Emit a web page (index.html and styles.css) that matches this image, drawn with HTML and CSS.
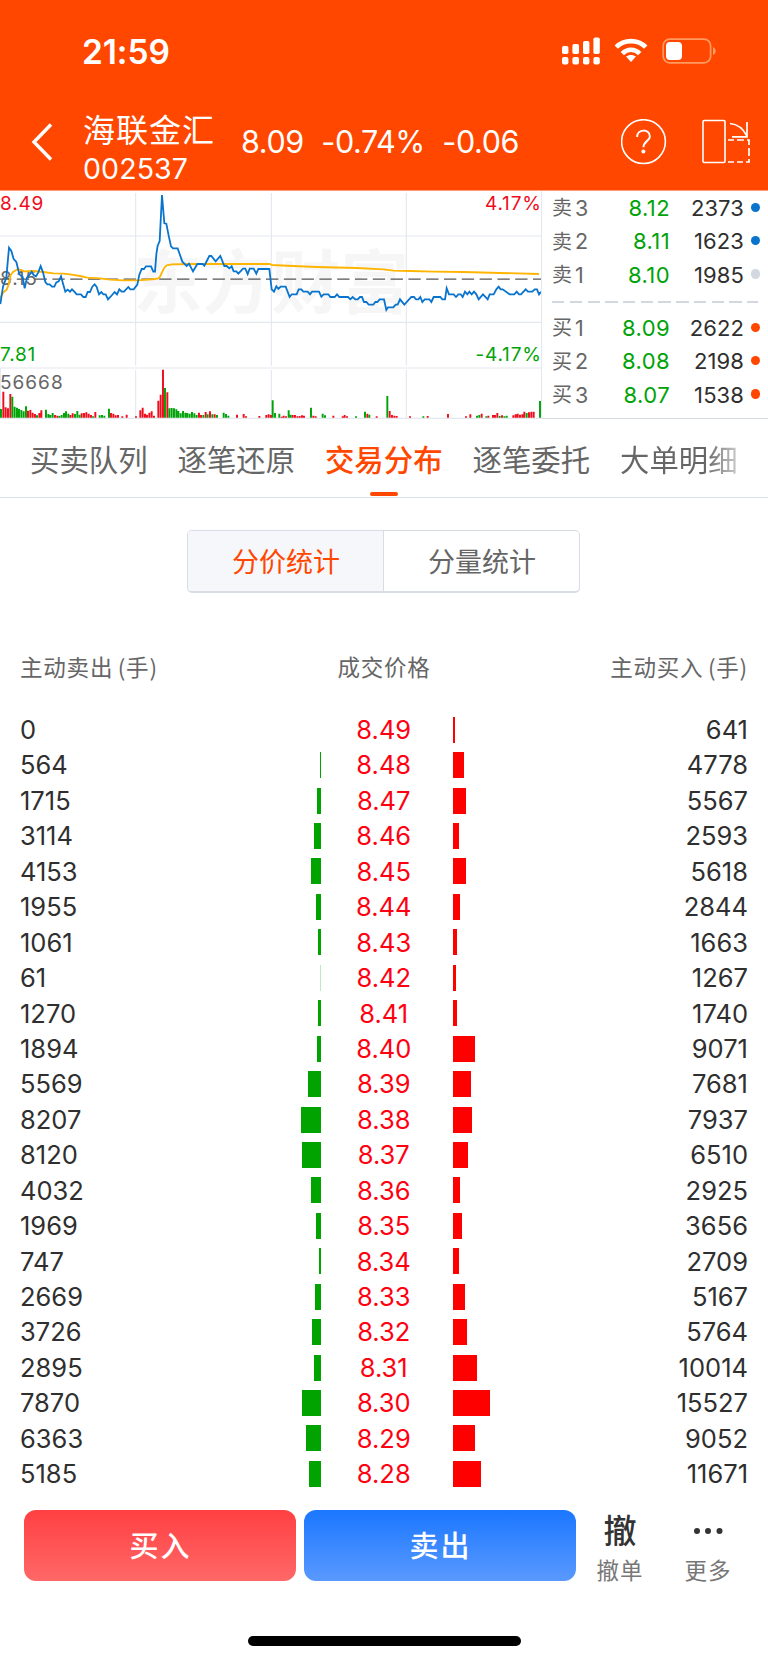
FILE: index.html
```html
<!DOCTYPE html>
<html lang="zh-CN">
<head>
<meta charset="utf-8">
<title>海联金汇 002537</title>
<link rel="stylesheet" href="styles.css">
</head>
<body>
<div class="app">
  <header class="header">
    <div class="status">
      <span class="time">21:59</span>
      <svg class="status-icons" width="160" height="30" viewBox="0 0 160 30" fill="#fff">
        <rect x="2" y="10" width="6.4" height="8" rx="1.8"/><rect x="12.4" y="8" width="6.6" height="10" rx="1.8"/><rect x="23" y="5" width="6.4" height="13" rx="1.8"/><rect x="33.4" y="1.5" width="6.4" height="16.5" rx="1.8"/>
        <rect x="2" y="21" width="6.4" height="7.6" rx="2"/><rect x="12.4" y="21" width="6.6" height="7.6" rx="2"/><rect x="23" y="21" width="6.4" height="7.6" rx="2"/><rect x="33.4" y="21" width="6.4" height="7.6" rx="2"/>
        <path fill="none" stroke="#fff" stroke-width="4.6" d="M56.3 11.2C64 3.1 78 3.1 85.7 11.2M62.3 17.6C67.2 12.4 74.8 12.4 79.7 17.6"/>
        <path d="M66 20.6C69 18.3 73 18.3 76 20.6L71 26Z"/>
        <rect x="103.2" y="3.2" width="47.4" height="23.6" rx="6.5" fill="none" stroke="#ff9a61" stroke-width="1.7"/>
        <rect x="106" y="6" width="16" height="18" rx="4"/>
        <path fill="#ff9a61" d="M153 11c3.6 1.6 3.6 6.6 0 8Z"/>
      </svg>
    </div>
    <div class="titlebar">
      <svg class="back" width="24" height="40" viewBox="0 0 24 40"><path d="M20 2.5 3 20 20 37.5" fill="none" stroke="#fff" stroke-width="3.4"/></svg>
      <div class="stock"><span class="stock-name">海联金汇</span><span class="stock-code">002537</span></div>
      <div class="quote"><span>8.09</span><span class="pct">-0.74%</span><span>-0.06</span></div>
      <svg class="help" width="46" height="46" viewBox="0 0 46 46" fill="none" stroke="#fff"><circle cx="22.5" cy="22.6" r="21.9" stroke-width="1.6"/><path stroke-width="2" d="M16.1 18C16.1 9.6 28.9 9.6 28.9 17.4C28.9 21.8 22.5 22.2 22.5 28.2"/><circle cx="22.4" cy="32.6" r="2" fill="#fff" stroke="none"/></svg>
      <svg class="rotate" width="48" height="46" viewBox="0 0 48 46" fill="none" stroke="#fff"><rect x="1" y="2.5" width="22" height="42" rx="1.2" stroke-width="1.6"/><path stroke-width="1.7" d="M28 5.5Q39 6.5 45 18M45 4V18.8H30"/><path stroke-width="1.7" d="M26 22h6m3 0h7m3 0h2v5m0 3v8m0 3v3h-3m-3 0h-6m-3 0h-6"/></svg>
    </div>
  </header>

  <section class="market">
    <svg class="chart" width="541" height="228" viewBox="0 18 1623 684">
      <text class="watermark" x="400" y="370">东方财富</text>
      <g fill="none" stroke="#e3e7ef" stroke-width="3.4">
        <path d="M0 153H1623M0 412H1623M0 549H1623M0 700H1623M407 24V542M407 555V698M814 24V542M814 555V698M1219 24V542M1219 555V698"/>
        <path d="M1 549V700"/>
      </g>
      <path d="M0 282.5H1623" stroke="#555" stroke-width="4" stroke-dasharray="37 16.4" stroke-dashoffset="3"/>
      <g class="axis">
        <text x="0" y="74" fill="#f00c1c">8.49</text>
        <text x="0" y="300" fill="#666">8.15</text>
        <text x="0" y="527" fill="#00a307">7.81</text>
        <text x="0" y="612" fill="#666" class="max-vol">56668</text>
        <text x="1625" y="74" fill="#f00c1c" text-anchor="end">4.17%</text>
        <text x="1625" y="527" fill="#00a307" text-anchor="end">-4.17%</text>
      </g>
      <path fill="none" stroke="#ffb400" stroke-width="5.5" stroke-linejoin="round" d="M0 340L10 322L20 314L27 296L32 270L40 260L50 254L60 254L72 259L100 258L130 261L160 265L190 266L215 269L240 273L262 278L300 280L330 284L370 286L415 286L465 282L475 280L480 275L486 262L493 248L500 241L515 238L570 237L810 237L815 240L880 243L950 246L1070 249L1150 253L1180 257L1230 258L1300 260L1390 261L1500 264L1617 267"/>
      <path fill="none" stroke="#0874cd" stroke-width="5.4" stroke-linejoin="miter" d="M1 357L9 305L19 278L27 188L34 198L41 222L49 231L58 268L68 276L74 310L81 278L88 270L95 260L101 270L108 274L115 262L122 243L129 262L136 291L142 298L149 298L156 305L163 305L169 292L176 289L183 274L190 299L196 320L203 314L210 320L216 313L223 320L230 328L243 328L250 336L257 336L263 321L270 321L277 305L284 298L290 306L297 328L304 321L310 328L317 328L324 343L331 336L344 321L351 328L358 313L365 320L372 320L385 306L391 313L401 313L412 299L418 269L425 252L432 252L438 244L453 244L460 260L465 260L469 208L473 182L479 168L486 30L493 115L499 116L506 152L513 184L519 190L533 190L547 230L560 243L567 236L579 259L592 237L608 237L613 242L628 213L634 213L647 229L661 213L673 243L680 243L688 250L695 244L701 259L709 259L715 266L729 251L736 251L743 267L749 251L761 251L769 266L775 252L808 252L815 313L822 320L829 304L835 312L842 305L857 305L869 336L875 328L890 328L896 313L904 313L910 320L923 320L930 328L936 320L957 320L964 335L971 328L985 328L991 336L1004 336L1011 328L1018 336L1044 336L1051 343L1058 336L1066 343L1073 343L1080 336L1086 336L1092 351L1099 351L1106 359L1120 359L1126 351L1132 351L1139 343L1152 343L1159 375L1164 367L1180 367L1187 359L1193 359L1200 343L1213 359L1234 336L1242 336L1248 343L1255 343L1261 336L1267 351L1274 343L1288 343L1294 351L1301 336L1321 336L1327 343L1335 343L1340 310L1347 328L1361 328L1368 336L1375 328L1382 328L1388 336L1395 320L1402 328L1408 320L1415 328L1422 320L1429 328L1436 343L1449 328L1463 343L1469 328L1481 328L1489 313L1496 305L1502 313L1508 313L1529 328L1543 328L1550 320L1557 328L1563 328L1577 313L1584 320L1597 320L1604 313L1611 313L1617 328L1623 320"/>
      <g class="volume">
        <path stroke="#f00c1c" d="M10 698V620M17 698V667M24 698V670M31 698V627M84 698V677M91 698V675M98 698V683M105 698V687M118 698V684M124 698V676M165 698V690M172 698V692M211 698V690M218 698V685M245 698V685M252 698V684M259 698V682M266 698V686M273 698V690M286 698V681M333 698V684M340 698V686M347 698V691M354 698V690M367 698V694M380 698V689M408 698V694M421 698V676M428 698V668M435 698V686M441 698V689M448 698V683M455 698V679M462 698V692M475 698V647M482 698V629M489 698V554M502 698V622M597 698V683M603 698V690M617 698V681M630 698V679M644 698V688M711 698V689M731 698V687M738 698V694M778 698V693M799 698V690M806 698V688M813 698V690M845 698V695M851 698V692M858 698V694M878 698V690M885 698V690M892 698V694M899 698V693M906 698V691M912 698V692M940 698V692M947 698V694M1000 698V692M1028 698V694M1034 698V690M1041 698V694M1102 698V686M1130 698V694M1169 698V678M1176 698V690M1183 698V692M1190 698V693M1230 698V694M1283 698V693M1344 698V687M1398 698V694M1411 698V688M1445 698V686M1465 698V692M1479 698V690M1485 698V690M1492 698V684M1506 698V691M1540 698V691M1547 698V688M1553 698V686M1560 698V689M1567 698V688M1573 698V680M1587 698V682M1594 698V680M1601 698V680"/>
        <path stroke="#00a307" d="M3 698V672M37 698V635M44 698V665M51 698V668M57 698V672M64 698V675M71 698V679M78 698V664M111 698V691M138 698V674M145 698V687M151 698V690M158 698V684M178 698V693M185 698V690M192 698V684M198 698V679M205 698V686M225 698V687M232 698V678M239 698V689M279 698V694M299 698V691M306 698V690M313 698V692M327 698V671M495 698V609M508 698V670M515 698V669M522 698V670M529 698V673M535 698V678M542 698V685M549 698V678M556 698V683M562 698V684M569 698V686M576 698V681M583 698V685M590 698V690M610 698V690M623 698V688M637 698V688M651 698V690M671 698V683M678 698V687M685 698V692M818 698V646M825 698V684M838 698V686M866 698V676M872 698V689M933 698V668M968 698V686M975 698V691M1068 698V694M1095 698V680M1108 698V689M1162 698V633M1270 698V694M1431 698V692M1438 698V690M1459 698V694M1499 698V693M1513 698V694M1520 698V692M1580 698V684M1620 698V648"/>
      </g>
    </svg>
    <div class="book">
      <div class="level"><span class="side">卖<b>3</b></span><span class="price">8.12</span><span class="vol">2373</span><i class="dot blue"></i></div>
      <div class="level"><span class="side">卖<b>2</b></span><span class="price">8.11</span><span class="vol">1623</span><i class="dot blue"></i></div>
      <div class="level"><span class="side">卖<b>1</b></span><span class="price">8.10</span><span class="vol">1985</span><i class="dot grey"></i></div>
      <div class="split"></div>
      <div class="level"><span class="side">买<b>1</b></span><span class="price">8.09</span><span class="vol">2622</span><i class="dot orange"></i></div>
      <div class="level"><span class="side">买<b>2</b></span><span class="price">8.08</span><span class="vol">2198</span><i class="dot orange"></i></div>
      <div class="level"><span class="side">买<b>3</b></span><span class="price">8.07</span><span class="vol">1538</span><i class="dot orange"></i></div>
    </div>
  </section>

  <nav class="tabs">
    <span class="tab">买卖队列</span><span class="tab">逐笔还原</span><span class="tab active">交易分布</span><span class="tab">逐笔委托</span><span class="tab fade">大单明细</span>
  </nav>

  <div class="segment"><span class="seg on">分价统计</span><span class="seg">分量统计</span></div>

  <div class="table-head"><span>主动卖出<i class="paren">(手)</i></span><span class="mid">成交价格</span><span class="end">主动买入<i class="paren">(手)</i></span></div>
  <main class="rows">
    <div class="row"><span>0</span><i class="bar sell" style="--v:0"></i><em>8.49</em><i class="bar buy" style="--v:641"></i><span class="end">641</span></div>
    <div class="row"><span>564</span><i class="bar sell" style="--v:564"></i><em>8.48</em><i class="bar buy" style="--v:4778"></i><span class="end">4778</span></div>
    <div class="row"><span>1715</span><i class="bar sell" style="--v:1715"></i><em>8.47</em><i class="bar buy" style="--v:5567"></i><span class="end">5567</span></div>
    <div class="row"><span>3114</span><i class="bar sell" style="--v:3114"></i><em>8.46</em><i class="bar buy" style="--v:2593"></i><span class="end">2593</span></div>
    <div class="row"><span>4153</span><i class="bar sell" style="--v:4153"></i><em>8.45</em><i class="bar buy" style="--v:5618"></i><span class="end">5618</span></div>
    <div class="row"><span>1955</span><i class="bar sell" style="--v:1955"></i><em>8.44</em><i class="bar buy" style="--v:2844"></i><span class="end">2844</span></div>
    <div class="row"><span>1061</span><i class="bar sell" style="--v:1061"></i><em>8.43</em><i class="bar buy" style="--v:1663"></i><span class="end">1663</span></div>
    <div class="row"><span>61</span><i class="bar sell faint" style="--v:400"></i><em>8.42</em><i class="bar buy" style="--v:1267"></i><span class="end">1267</span></div>
    <div class="row"><span>1270</span><i class="bar sell" style="--v:1270"></i><em>8.41</em><i class="bar buy" style="--v:1740"></i><span class="end">1740</span></div>
    <div class="row"><span>1894</span><i class="bar sell" style="--v:1894"></i><em>8.40</em><i class="bar buy" style="--v:9071"></i><span class="end">9071</span></div>
    <div class="row"><span>5569</span><i class="bar sell" style="--v:5569"></i><em>8.39</em><i class="bar buy" style="--v:7681"></i><span class="end">7681</span></div>
    <div class="row"><span>8207</span><i class="bar sell" style="--v:8207"></i><em>8.38</em><i class="bar buy" style="--v:7937"></i><span class="end">7937</span></div>
    <div class="row"><span>8120</span><i class="bar sell" style="--v:8120"></i><em>8.37</em><i class="bar buy" style="--v:6510"></i><span class="end">6510</span></div>
    <div class="row"><span>4032</span><i class="bar sell" style="--v:4032"></i><em>8.36</em><i class="bar buy" style="--v:2925"></i><span class="end">2925</span></div>
    <div class="row"><span>1969</span><i class="bar sell" style="--v:1969"></i><em>8.35</em><i class="bar buy" style="--v:3656"></i><span class="end">3656</span></div>
    <div class="row"><span>747</span><i class="bar sell" style="--v:747"></i><em>8.34</em><i class="bar buy" style="--v:2709"></i><span class="end">2709</span></div>
    <div class="row"><span>2669</span><i class="bar sell" style="--v:2669"></i><em>8.33</em><i class="bar buy" style="--v:5167"></i><span class="end">5167</span></div>
    <div class="row"><span>3726</span><i class="bar sell" style="--v:3726"></i><em>8.32</em><i class="bar buy" style="--v:5764"></i><span class="end">5764</span></div>
    <div class="row"><span>2895</span><i class="bar sell" style="--v:2895"></i><em>8.31</em><i class="bar buy" style="--v:10014"></i><span class="end">10014</span></div>
    <div class="row"><span>7870</span><i class="bar sell" style="--v:7870"></i><em>8.30</em><i class="bar buy" style="--v:15527"></i><span class="end">15527</span></div>
    <div class="row"><span>6363</span><i class="bar sell" style="--v:6363"></i><em>8.29</em><i class="bar buy" style="--v:9052"></i><span class="end">9052</span></div>
    <div class="row"><span>5185</span><i class="bar sell" style="--v:5185"></i><em>8.28</em><i class="bar buy" style="--v:11671"></i><span class="end">11671</span></div>
  </main>

  <footer class="actions">
    <div class="btn buy-btn">买入</div>
    <div class="btn sell-btn">卖出</div>
    <div class="tool"><span class="glyph">撤</span><span class="label">撤单</span></div>
    <div class="tool more"><svg width="32" height="36" viewBox="0 0 32 36" fill="#333"><circle cx="5" cy="17" r="3"/><circle cx="16" cy="17" r="3"/><circle cx="27.5" cy="17" r="3"/></svg><span class="label">更多</span></div>
  </footer>
  <div class="home"></div>
</div>
</body>
</html>
```
FILE: styles.css
```css
* { box-sizing: border-box; }
body { margin: 0; background: #fff; font-family: Inter, "Noto Sans CJK SC", sans-serif; font-feature-settings: "calt" 0; color: #2f2f2f; }
i, em { font-style: normal; }
.app { width: 768px; height: 1663px; overflow: hidden; display: flex; flex-direction: column; }

.header { height: 191px; flex: none; background: linear-gradient(#ff4700 190px, #ff9b78 190px); color: #fff; }
.status { height: 94px; padding: 36px 0 0 82px; display: flex; align-items: flex-start; }
.time { width: 478px; font-size: 33.5px; line-height: 33px; font-weight: 600; letter-spacing: -.1px; }
.titlebar { height: 97px; display: flex; align-items: flex-start; padding-left: 31px; }
.back { margin-top: 28px; }
.stock { display: flex; flex-direction: column; width: 158px; margin-left: 28px; padding-top: 15px; }
.stock-name { font: 400 32px/38px "Noto Sans CJK SC", sans-serif; letter-spacing: 1px; }
.stock-code { font-size: 28.5px; line-height: 40px; margin-top: 2px; letter-spacing: .1px; }
.quote { width: 380px; padding-top: 28px; display: flex; gap: 17.5px; font-size: 30.5px; line-height: 40px; letter-spacing: -.4px; }
.help { margin-top: 25px; }
.rotate { margin: 24px 0 0 35px; }

.market { height: 228px; flex: none; display: flex; }
.chart { flex: none; display: block; }
.axis { font-size: 57px; letter-spacing: 2.4px; }
.max-vol { letter-spacing: 3px; }
.watermark { font: 700 207px "Noto Sans CJK SC", sans-serif; fill: #f6f6f7; }
.volume path { stroke-width: 5.8; }
.book { flex: 1; border-left: 1px solid #e3e7ef; border-bottom: 1px solid #d8dce4; padding: .6px 0 0 10px; }
.level { height: 33.45px; display: grid; grid-template-columns: 50px 68px 74px 24px; align-items: center; font-size: 22px; line-height: 33px; }
.side { font: 400 20px/33px "Noto Sans CJK SC", sans-serif; color: #666; display: flex; align-items: center; gap: 3px; margin-top: -3px; }
.side b { font: 400 21.5px/33px Inter, sans-serif; margin-top: 3px; }
.price { color: #00a307; text-align: right; letter-spacing: .4px; }
.vol { text-align: right; letter-spacing: .1px; }
.dot { width: 9.4px; height: 9.4px; border-radius: 50%; margin-left: 7px; margin-top: -2px; }
.blue { background: #0874cd; }
.grey { background: #d3d7df; }
.orange { background: #ff4700; }
.split { height: 2px; width: 206px; margin: 9px 0 8.6px; background: repeating-linear-gradient(90deg, #d3d7df 0 12.3px, transparent 12.3px 17.75px); }

.tabs { height: 79px; flex: none; border-bottom: 1.5px solid #dde1e9; display: flex; gap: 30px; padding-left: 30px; font-family: "Noto Sans CJK SC", sans-serif; font-size: 29.4px; line-height: 78px; color: #666; }
.tab { width: 117.5px; white-space: nowrap; }
.tab.active { color: #ff4700; font-weight: 500; display: flex; flex-direction: column; align-items: center; }
.tab.active::after { content: ""; width: 28px; height: 4px; margin-top: -5px; border-radius: 2px; background: #ff4700; flex: none; }
.fade { background: linear-gradient(90deg, #666 72%, #ccc); -webkit-background-clip: text; background-clip: text; color: transparent; }

.segment { width: 393px; height: 63px; flex: none; margin: 31.5px 0 .5px 187.4px; border: 1.5px solid #d8dde5; border-bottom-width: 2px; border-radius: 5px; display: flex; overflow: hidden; font: 400 27px/60px "Noto Sans CJK SC", sans-serif; color: #666; text-align: center; }
.seg { flex: 1; }
.seg.on { background: #f6f7fa; color: #ff4700; border-right: 1.5px solid #d8dde5; }

.table-head { height: 30px; flex: none; margin: 58px 20px 0; display: grid; grid-template-columns: 1fr 1fr 1fr; font: 400 22.5px/30px "Noto Sans CJK SC", sans-serif; letter-spacing: .8px; color: #666; }
.paren { margin-left: 4.5px; }
.mid { text-align: center; }
.end { text-align: right; }

.rows { flex: none; margin-top: 31px; padding: 0 20px; font-size: 25.5px; }
.row { height: 35.45px; display: grid; grid-template-columns: 261px 40px 132px 40px 1fr; align-items: center; line-height: 35.45px; }
.row em { text-align: center; color: #ff0010; padding-right: 6.5px; }
.bar { display: block; height: 26px; width: calc(var(--v) * .00238px); }
.sell { background: #00a300; justify-self: end; }
.buy { background: #f00; }
.faint { opacity: .25; }

.actions { height: 71px; flex: none; margin-top: 18px; padding-left: 24px; display: flex; gap: 8px; font-family: "Noto Sans CJK SC", sans-serif; }
.btn { width: 272px; height: 71px; border-radius: 12px; color: #fff; font-weight: 500; font-size: 29px; line-height: 69px; letter-spacing: 2px; padding-left: 1px; text-align: center; }
.buy-btn { background: linear-gradient(#ff4042, #ff6868); }
.sell-btn { background: linear-gradient(#1b77ff, #5a99ff); }
.tool { width: 72px; display: flex; flex-direction: column; align-items: center; }
.glyph { height: 42px; flex: none; font-size: 33px; line-height: 38px; font-weight: 500; color: #333; }
.label { flex: none; font-size: 22.5px; line-height: 34px; color: #777; letter-spacing: 1px; }
.more { margin-left: 8px; }
.more svg { flex: none; margin: 4px 0 2px; }
.home { width: 273px; height: 10px; flex: none; border-radius: 5px; background: #000; margin: 55px 0 0 247.5px; }
```
